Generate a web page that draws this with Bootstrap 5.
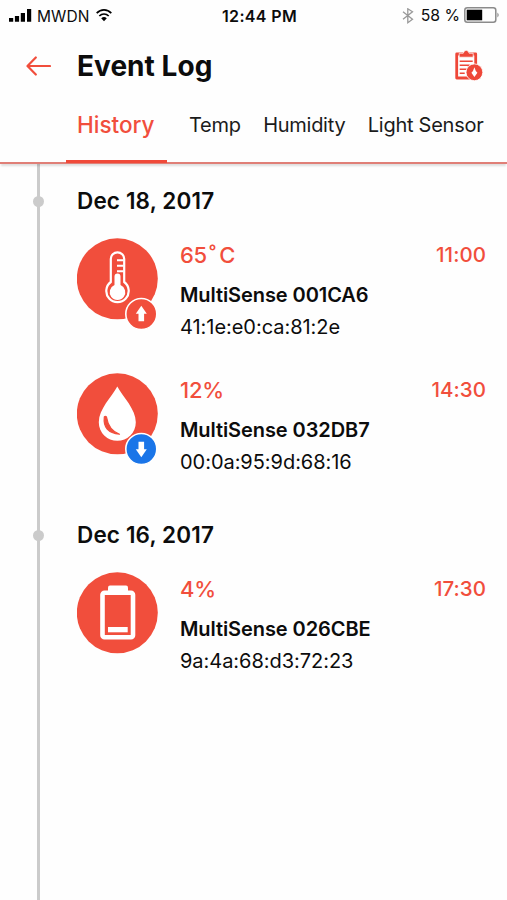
<!DOCTYPE html>
<html lang="en">
<head>
<meta charset="utf-8">
<meta name="viewport" content="width=device-width, initial-scale=1">
<title>Event Log</title>
<link href="https://cdn.jsdelivr.net/npm/bootstrap@5.3.0/dist/css/bootstrap.min.css" rel="stylesheet">
<style>
  :root { --accent: #f14e3c; --event-blue: #1a75e8; }
  body { font-family: Inter, "Liberation Sans", sans-serif; color: #0c0c0c; background: #fefefe; overflow: hidden; }
  svg { display: block; flex: none; }
  .app { width: 507px; height: 900px; }
  .status { height: 32px; font-size: 16px; line-height: 32px; padding: 0 7px 0 8px; }
  .status > div { flex: 1 1 0; }
  .clock { font-weight: 600; letter-spacing: .35px; margin-left: 11px; }
  .carrier { font-size: 15.5px; margin: 1px 6px 0 5px; letter-spacing: .1px; }
  .charge { font-size: 15.8px; margin: 0 4px 0 7px; }
  .title-bar { height: 68px; padding: 0 23px 0 26px; }
  .title-bar h1 { font-size: 28px; font-weight: 700; margin: 1px 0 0 26px; letter-spacing: .05px; }
  .tabs { height: 64px; padding-left: 66px; border-bottom: 2px solid #e07f77; box-shadow: 0 3px 2px -1px rgba(0,0,0,.13); position: relative; z-index: 1; }
  .tabs .nav-link { color: #1b1b1b; font-size: 20px; letter-spacing: -.26px; line-height: 30px; padding: 10px 0 0; height: 63px; margin-left: 22.4px; }
  .tabs .nav-link.active { color: var(--accent); font-size: 22.5px; letter-spacing: 0; font-weight: 500; width: 101px; margin: 0 -.4px 0 0; padding-left: 11px; border-bottom: 3px solid #f04a3a; }
  .rail { width: 3px; background: #cbcbcb; margin-left: 37px; flex: none; }
  .log { padding: 21px 21px 0 37px; }
  .date { font-size: 22.5px; font-weight: 600; line-height: 32px; letter-spacing: .15px; margin-bottom: 21px; }
  .date::before { content: ""; width: 11px; height: 11px; border-radius: 50%; background: #cbcbcb; margin-left: -44px; margin-right: 33px; }
  .event { height: 135px; }
  .event-text { margin-left: 22px; }
  .value { font-size: 22px; line-height: 34px; color: var(--accent); font-weight: 500; letter-spacing: -.25px; }
  .degree { margin: 0 3.5px 0 2px; }
  .time { font-size: 20.5px; letter-spacing: .05px; }
  .device { font-size: 20px; line-height: 32px; margin-top: 7px; font-weight: 600; letter-spacing: -.08px; }
  .mac { font-size: 20px; line-height: 33px; letter-spacing: -.04px; }
  .next-day { margin-top: 11px; }
</style>
</head>
<body>
<div class="app d-flex flex-column">
  <header>
    <div class="status d-flex align-items-center text-nowrap">
      <div class="d-flex align-items-center">
        <svg width="24" height="16" viewBox="0 0 24 16"><path d="M1 10h4.200v3.800H1zM6.900 8h4.200v5.800H6.900zM12.800 5h4.200v8.800h-4.200zM19 1h4.200v12.800H19z"/></svg>
        <span class="carrier">MWDN</span>
        <svg width="16" height="15" viewBox="0 0 16 15"><g fill="none" stroke="#000" stroke-width="1.700"><path d="M.7 4.200C4.800-.2 11.200-.2 15.300 4.200"/><path d="M3.300 7C6 4.300 10 4.300 12.700 7"/></g><path d="M5.200 9.200Q8 6.900 10.800 9.200L8 12.200z"/></svg>
      </div>
      <span class="clock">12:44 PM</span>
      <div class="d-flex align-items-center justify-content-end">
        <svg width="12" height="17" viewBox="0 0 12 17" fill="none" stroke="#999" stroke-width="1.300"><path d="M1 3.700l9.500 7.600L5.800 14.700V.8l4.700 2.900L1 11.300"/></svg>
        <span class="charge">58 %</span>
        <svg width="36" height="18" viewBox="0 0 36 18"><rect x=".8" y=".8" width="31" height="14.400" rx="2.500" fill="none" stroke="#8b8b8b" stroke-width="1.500"/><path d="M2.700 2.700h15.500v10.600H2.700z"/><path d="M33.300 5.500q3 2.500 0 5z" fill="#999"/></svg>
      </div>
    </div>
    <div class="title-bar d-flex align-items-center">
      <svg width="25" height="20" viewBox="0 0 25 20" fill="none" stroke="#f14e3c" stroke-width="2.200" stroke-linecap="round" stroke-linejoin="round"><path d="M24 10H1.800M9.800 1.500L1.500 10l8.300 8.500"/></svg>
      <h1>Event Log</h1>
      <svg class="ms-auto" width="30" height="32" viewBox="0 0 30 32">
        <path d="M2.700 4h19v24h-19z" fill="none" stroke="#ee4738" stroke-width="2.800" stroke-linejoin="round"/>
        <path d="M5.200 7.200V3.300h4Q10 .3 12.200.3t3 3h4v3.900z" fill="#ee4738" stroke="#fff" stroke-width=".7"/>
        <g stroke="#ee4738" stroke-width="1.500"><path d="M5.700 11.200h13M5.700 15.200h10M5.700 19.200h7M5.700 23.200h5"/></g>
        <circle cx="20.400" cy="22.300" r="8.400" fill="#ee4738" stroke="#fff" stroke-width=".8"/>
        <path d="M20.400 27l-3-4.300 1.600-1.800 1.400-3.600 1.400 3.600 1.600 1.800z" fill="#fff"/>
      </svg>
    </div>
    <nav class="tabs nav flex-nowrap text-nowrap">
      <a class="nav-link active" href="#">History</a>
      <a class="nav-link" href="#">Temp</a>
      <a class="nav-link" href="#">Humidity</a>
      <a class="nav-link" href="#">Light Sensor</a>
    </nav>
  </header>
  <main class="d-flex flex-grow-1">
    <div class="rail"></div>
    <div class="log flex-grow-1">
      <section>
        <div class="date d-flex align-items-center">Dec 18, 2017</div>
        <div class="event d-flex">
          <svg width="81" height="92" viewBox="0 0 81 92">
            <circle cx="40.300" cy="40.800" r="40.500" fill="#f14e3c"/>
            <path d="M33.800 44V21a6.700 6.700 0 0 1 13.400 0V44a11.200 11.200 0 1 1-13.400 0z" fill="none" stroke="#fff" stroke-width="2.200"/>
            <path d="M37.500 47V38.500a3 3 0 0 1 6 0V47a7.800 7.800 0 1 1-6 0z" fill="#fff"/>
            <path d="M40 22.300H46.500M40 27.800H46.500M40 33.300H46.500" stroke="#fff" stroke-width="2"/>
            <circle cx="64.300" cy="76" r="15.500" fill="#f14e3c" stroke="#fff" stroke-width="1.600"/>
            <path d="M64.300 67.800l5.500 8h-2.700v7.500h-5.600v-7.500h-2.700z" fill="#fff"/>
          </svg>
          <div class="event-text flex-grow-1">
            <div class="value d-flex justify-content-between"><span>65<span class="degree">˚</span>C</span><span class="time">11:00</span></div>
            <div class="device">MultiSense 001CA6</div>
            <div class="mac">41:1e:e0:ca:81:2e</div>
          </div>
        </div>
        <div class="event d-flex">
          <svg width="81" height="92" viewBox="0 0 81 92">
            <circle cx="40.300" cy="40.800" r="40.500" fill="#f14e3c"/>
            <path d="M40.300 13.500C46 24 58.800 36 58.800 49.300a18.500 18.500 0 0 1-37 0C21.800 36 34.600 24 40.300 13.500z" fill="#fff"/>
            <path d="M27.300 44Q25.500 59.500 42.500 61.200Q31.500 57 29.500 44Q28.300 42.800 27.300 44z" fill="#f14e3c" stroke="#f14e3c" stroke-width="1.200" stroke-linejoin="round"/>
            <circle cx="64.300" cy="76" r="15.500" fill="#1a75e8" stroke="#fff" stroke-width="1.600"/>
            <path d="M64.300 84.300l5.500-8h-2.700v-7.500h-5.600v7.500h-2.700z" fill="#fff"/>
          </svg>
          <div class="event-text flex-grow-1">
            <div class="value d-flex justify-content-between"><span>12%</span><span class="time">14:30</span></div>
            <div class="device">MultiSense 032DB7</div>
            <div class="mac">00:0a:95:9d:68:16</div>
          </div>
        </div>
      </section>
      <section class="next-day">
        <div class="date d-flex align-items-center">Dec 16, 2017</div>
        <div class="event d-flex">
          <svg width="81" height="92" viewBox="0 0 81 92">
            <circle cx="40.300" cy="40.800" r="40.500" fill="#f14e3c"/>
            <rect x="25.500" y="20.800" width="30.500" height="44.500" rx="2" fill="none" stroke="#fff" stroke-width="4.600"/>
            <path d="M31 20v-4.500a2 2 0 0 1 2-2h16a2 2 0 0 1 2 2V20z" fill="#fff"/>
            <path d="M31 55h19.700v5.300H31z" fill="#fff"/>
          </svg>
          <div class="event-text flex-grow-1">
            <div class="value d-flex justify-content-between"><span>4%</span><span class="time">17:30</span></div>
            <div class="device">MultiSense 026CBE</div>
            <div class="mac">9a:4a:68:d3:72:23</div>
          </div>
        </div>
      </section>
    </div>
  </main>
</div>
<script src="https://cdn.jsdelivr.net/npm/bootstrap@5.3.0/dist/js/bootstrap.bundle.min.js"></script>
</body>
</html>
